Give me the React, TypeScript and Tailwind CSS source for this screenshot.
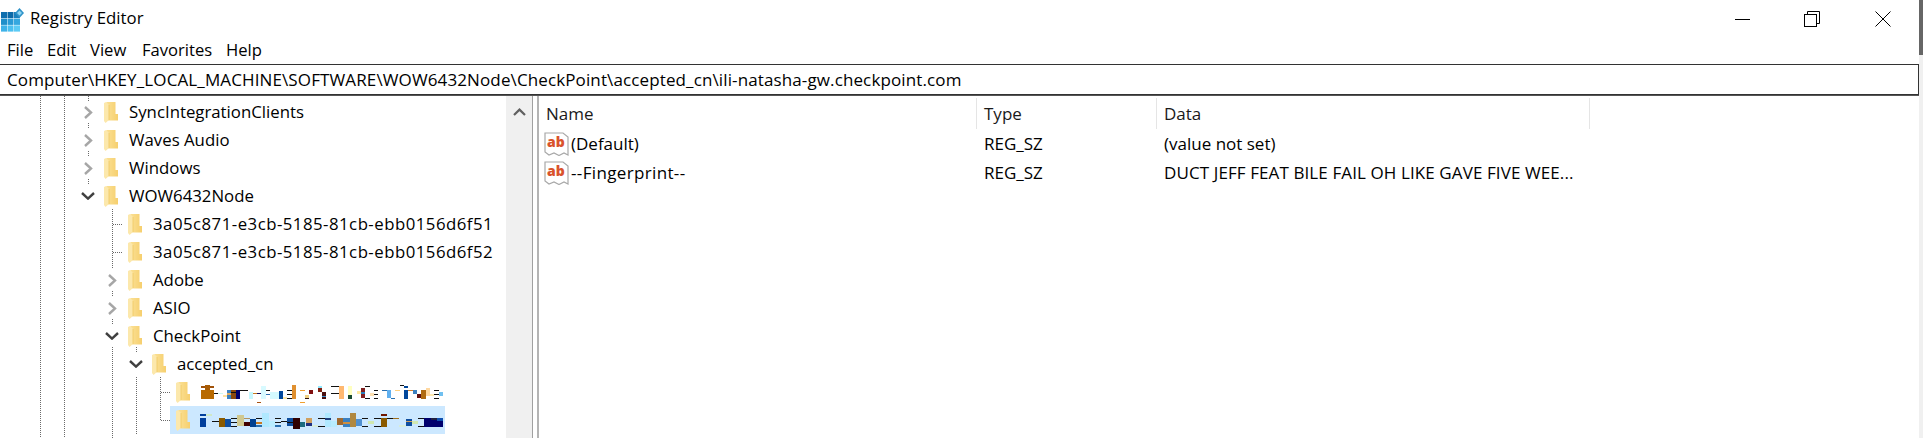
import React from "react";

const font = "font-['Open_Sans','Noto_Sans',sans-serif]";

function AppIcon() {
  const cells = [
    ["#0f6fae", "#0c6aa8", "#1a80bd"],
    ["#1f8fca", "#2a9bd6", "#35a8e0"],
    ["#3eb2e8", "#4cc0f0", "#5ccbf5"],
  ];
  return (
    <svg width="24" height="32" viewBox="0 0 24 32" className="shrink-0">
      {cells.map((r, y) =>
        r.map((c, x) => <rect key={`${x}${y}`} x={1 + x * 6.5} y={9 + y * 6.7} width="6" height="6.2" fill={c} />)
      )}
      <path d="M19.5 5 L24 10 L19.5 15 L15 10 Z" fill="#2f93c9" />
      <path d="M19.5 7.5 L22 10 L19.5 12.5 L17 10 Z" fill="#8fd4f2" />
    </svg>
  );
}

function Folder() {
  return (
    <svg width="14" height="21" viewBox="0 0 14 21" className="shrink-0">
      <defs>
        <linearGradient id="fb" x1="0" x2="1" y1="0" y2="0">
          <stop offset="0" stopColor="#fbe196" />
          <stop offset="1" stopColor="#f6cf6e" />
        </linearGradient>
      </defs>
      <path d="M2 0 H11.5 V12 H14 V18.5 H4 V3 Z" fill="url(#fb)" />
      <path d="M0 1 L2 0 L5 3 V18 L1.5 21 L0 19 Z" fill="#fce8ac" />
      <path d="M5 3 V18" stroke="#f0c860" strokeWidth="0.8" />
    </svg>
  );
}

function Chevron({ open }: { open?: boolean }) {
  return (
    <span className="w-[16px] h-full flex items-center justify-center shrink-0">
      {open === undefined ? null : open ? (
        <svg width="14" height="8" viewBox="0 0 14 8">
          <path d="M1 1 L7 6.6 L13 1" fill="none" stroke="#404040" strokeWidth="2.4" />
        </svg>
      ) : (
        <svg width="9" height="13" viewBox="0 0 9 13">
          <path d="M1 1 L7 6.5 L1 12" fill="none" stroke="#a6a6a6" strokeWidth="2.4" />
        </svg>
      )}
    </span>
  );
}

type R = [number, number, number, number, string];

const noiseA: R[] = [
  [1, 8, 13, 2, "#a0520a"], [5, 7, 5, 5, "#a85c06"], [1, 12, 13, 9, "#b86a00"],
  [14, 15, 4, 1, "#111"], [18, 15, 5, 1, "#cdfaf5"], [23, 17, 4, 2, "#ffe3a0"],
  [27, 12, 4, 9, "#3a80c0"], [27, 15, 4, 2, "#d8a860"], [31, 12, 5, 9, "#8a4a10"], [31, 14, 5, 1, "#111"], [36, 12, 4, 9, "#00006e"],
  [40, 12, 8, 1, "#111"], [49, 14, 4, 7, "#c8f8ff"], [53, 15, 4, 1, "#c87a20"], [57, 15, 4, 1, "#101060"], [57, 24, 4, 1, "#a85010"],
  [61, 8, 5, 13, "#d8faff"], [66, 12, 4, 1, "#111"], [66, 16, 4, 1, "#2a70b0"], [70, 14, 9, 7, "#d4faff"], [79, 13, 4, 8, "#00479c"], [83, 19, 4, 2, "#ffe9a8"],
  [87, 12, 5, 1, "#111"], [87, 16, 5, 1, "#111"], [87, 20, 5, 1, "#111"], [92, 7, 4, 14, "#e09030"],
  [100, 12, 5, 1, "#f0a030"], [100, 24, 5, 1, "#f0a030"], [105, 17, 4, 4, "#f0d080"], [105, 20, 4, 1, "#301010"], [109, 12, 4, 4, "#801010"],
  [118, 8, 4, 2, "#90e8ff"], [118, 10, 4, 4, "#802010"], [122, 14, 4, 7, "#4a1010"], [122, 18, 4, 1, "#3a90d0"],
  [131, 8, 8, 1, "#111"], [131, 15, 8, 1, "#111"], [139, 8, 5, 13, "#ffb870"], [148, 8, 4, 9, "#ffffc0"], [148, 17, 4, 4, "#1a4a30"],
  [157, 13, 4, 3, "#ffe8a0"], [161, 10, 4, 10, "#802020"], [161, 14, 4, 2, "#2a80c0"], [165, 8, 5, 1, "#111"], [165, 20, 5, 1, "#111"], [170, 15, 4, 3, "#ffe0b0"],
  [174, 12, 4, 1, "#111"], [174, 16, 4, 1, "#111"], [174, 20, 4, 1, "#111"],
  [182, 12, 5, 1, "#2a70b0"], [187, 12, 4, 8, "#60b0f0"], [191, 20, 4, 1, "#2a70b0"], [195, 12, 5, 1, "#ffd080"], [200, 7, 4, 1, "#111"],
  [204, 8, 4, 2, "#00479c"], [204, 12, 4, 9, "#00479c"], [208, 12, 5, 1, "#d08030"], [213, 12, 4, 4, "#3a80c0"], [217, 16, 4, 4, "#601010"],
  [221, 12, 5, 9, "#b06a10"], [226, 10, 4, 8, "#ffd8a0"], [230, 16, 4, 2, "#ffeab0"], [234, 12, 5, 1, "#111"], [234, 16, 5, 1, "#111"], [234, 20, 5, 1, "#111"], [239, 14, 4, 4, "#70c0f0"],
];

const noiseB: R[] = [
  [0, 8, 6, 2, "#003e9c"], [6, 8, 6, 2, "#cfe8c8"], [0, 12, 6, 9, "#003e9c"],
  [12, 15, 7, 1, "#111"], [19, 12, 6, 9, "#8a5a00"], [25, 13, 6, 8, "#0e4ea0"], [31, 12, 6, 1, "#111"], [31, 16, 6, 1, "#111"], [31, 20, 6, 1, "#111"],
  [37, 9, 7, 11, "#d0c890"], [44, 12, 6, 1, "#b09060"], [44, 16, 6, 4, "#400000"], [50, 13, 6, 8, "#004090"], [56, 12, 6, 1, "#111"], [56, 16, 6, 2, "#c87a20"], [56, 19, 6, 2, "#2a70b0"],
  [62, 7, 7, 14, "#b0e8ff"], [69, 15, 6, 6, "#b8ecff"], [75, 12, 6, 1, "#111"], [75, 16, 6, 1, "#111"], [75, 19, 6, 2, "#2a70b0"],
  [81, 15, 6, 1, "#111"], [87, 12, 6, 8, "#0e4ea0"], [87, 16, 6, 1, "#111"], [93, 12, 7, 11, "#300000"], [100, 16, 5, 5, "#1a6a80"], [106, 12, 6, 8, "#d0a060"], [106, 17, 6, 3, "#203080"],
  [112, 19, 6, 2, "#d8ecd8"], [118, 12, 7, 1, "#111"], [118, 20, 7, 1, "#111"], [125, 7, 6, 14, "#b0e8ff"], [125, 12, 6, 2, "#204080"], [131, 15, 6, 6, "#b8ecff"],
  [137, 12, 6, 7, "#a06a30"], [143, 12, 7, 9, "#3a80c0"], [143, 16, 7, 2, "#d09040"], [150, 7, 6, 14, "#b08840"], [156, 13, 6, 7, "#5090d0"], [162, 12, 6, 1, "#111"], [162, 20, 6, 1, "#111"],
  [168, 15, 6, 3, "#d0e8b0"], [174, 12, 7, 1, "#111"], [174, 20, 7, 1, "#111"], [181, 8, 6, 2, "#701800"], [181, 12, 6, 9, "#8a5a00"], [187, 12, 6, 1, "#111"], [193, 12, 6, 1, "#a07020"],
  [199, 19, 7, 2, "#d8ecd8"], [206, 13, 6, 7, "#0e4ea0"], [206, 15, 6, 1, "#d0a060"], [212, 15, 6, 3, "#d0e8b0"], [218, 12, 6, 1, "#111"], [218, 20, 6, 1, "#111"],
  [224, 12, 19, 9, "#00006e"], [231, 12, 6, 2, "#202040"], [237, 12, 6, 3, "#1050b0"],
];

function Noise({ rects }: { rects: R[] }) {
  return (
    <svg width="245" height="28" viewBox="0 0 245 28" className="shrink-0">
      {rects.map(([x, y, w, h, c], i) => (
        <rect key={i} x={x} y={y} width={w} height={h} fill={c} shapeRendering="crispEdges" />
      ))}
    </svg>
  );
}

function TreeRow({ pad, open, label, noise, selected, labelClass }: { pad: string; open?: boolean; label?: string; noise?: R[]; selected?: boolean; labelClass?: string }) {
  return (
    <div className={`h-[28px] flex items-center text-[16.8px] text-black ${pad}`}>
      <Chevron open={open} />
      <div className={`h-[28px] ml-[2px] pl-[6px] flex items-center ${selected ? "bg-[#cce8ff]" : ""}`}>
        <Folder />
        {label ? <span className={`ml-[11px] whitespace-nowrap ${labelClass ?? ""}`}>{label}</span> : null}
        {noise ? <span className="ml-[10px] flex"><Noise rects={noise} /></span> : null}
      </div>
    </div>
  );
}

function AbIcon() {
  return (
    <svg width="25" height="24" viewBox="0 0 25 24" className="shrink-0">
      <path d="M1 1 H19 L24 5 V23 L20 21 L15 23.5 L10 21 L5 23 L1 20 Z" fill="#fff" stroke="#a8a8a8" strokeWidth="1.2" />
      <text x="3" y="15" fontFamily="Open Sans" fontWeight="800" fontSize="14" fill="#d9532c">ab</text>
    </svg>
  );
}

function ValueRow({ name, data, nameClass, dataClass }: { name: string; data: string; nameClass?: string; dataClass?: string }) {
  return (
    <div className="h-[29px] flex items-center text-[17px] text-black">
      <div className="w-[438px] pl-[5px] flex items-center">
        <AbIcon />
        <span className={`ml-[2px] whitespace-nowrap ${nameClass ?? ""}`}>{name}</span>
      </div>
      <div className="w-[180px] pl-[7px]">REG_SZ</div>
      <div className={`pl-[7px] whitespace-nowrap ${dataClass ?? ""}`}>{data}</div>
    </div>
  );
}

function TreeLines() {
  const d = "#6a6a6a";
  const v = (x: number, a: number, b: number) => `M${x + 0.5} ${a}V${b}`;
  const h = (y: number, a: number, b: number) => `M${a} ${y + 0.5}H${b}`;
  const path = [
    v(40, 95, 438), v(64, 95, 438),
    v(88, 95, 100), v(88, 122, 127), v(88, 150, 155), v(88, 178, 183),
    v(112, 208, 262), h(223, 113, 123), h(251, 113, 123),
    v(112, 262, 268), v(112, 290, 295), v(112, 318, 323), v(112, 346, 438),
    v(136, 346, 351), v(136, 376, 434),
    v(160, 376, 420), h(391, 161, 170), h(419, 161, 170),
  ].join("");
  return (
    <svg width="506" height="343" viewBox="0 95 506 343" className="absolute left-0 top-0 pointer-events-none">
      <path d={path} fill="none" stroke={d} strokeWidth="1" strokeDasharray="1 1" shapeRendering="crispEdges" />
    </svg>
  );
}

export default function App() {
  return (
    <div className={`w-[1923px] h-[438px] overflow-hidden bg-white flex text-black ${font}`}>
      <div className="w-[1919px] flex flex-col">
        <div className="h-[38px] flex items-center">
          <div className="pl-[0px] w-[30px] shrink-0"><AppIcon /></div>
          <span className="text-[16.8px] pb-[2px]">Registry Editor</span>
          <div className="ml-auto flex h-full">
            <div className="w-[69px] flex items-center justify-center">
              <svg width="15" height="15" viewBox="0 0 15 15"><path d="M0 7.5H15" stroke="#000" strokeWidth="1" /></svg>
            </div>
            <div className="w-[69px] flex items-center justify-center">
              <svg width="16" height="16" viewBox="0 0 16 16" fill="none" stroke="#000" strokeWidth="1">
                <rect x="0.5" y="3.5" width="12" height="12" />
                <path d="M3.5 3.5V0.5H15.5V12.5H12.5" />
              </svg>
            </div>
            <div className="w-[73px] flex items-center justify-center">
              <svg width="16" height="16" viewBox="0 0 16 16"><path d="M0.5 0.5L15.5 15.5M15.5 0.5L0.5 15.5" stroke="#000" strokeWidth="1" /></svg>
            </div>
          </div>
        </div>
        <div className="h-[26px] flex items-center pl-[7px] pb-[2px] text-[16.6px]">
          <span className="w-[40px]">File</span>
          <span className="w-[43px]">Edit</span>
          <span className="w-[52px]">View</span>
          <span className="w-[84px]">Favorites</span>
          <span>Help</span>
        </div>
        <div className="h-[31px] border-y border-r border-[#333] flex items-center pl-[7px] text-[17px] tracking-[0.12px] whitespace-nowrap">
          Computer\HKEY_LOCAL_MACHINE\SOFTWARE\WOW6432Node\CheckPoint\accepted_cn\ili-natasha-gw.checkpoint.com
        </div>
        <div className="flex-1 flex min-h-0 border-t border-[#555]">
          <div className="relative w-[506px] shrink-0 overflow-hidden pt-[2px]">
            <TreeLines />
            <TreeRow pad="pl-[80px]" open={false} label="SyncIntegrationClients" />
            <TreeRow pad="pl-[80px]" open={false} label="Waves Audio" />
            <TreeRow pad="pl-[80px]" open={false} label="Windows" />
            <TreeRow pad="pl-[80px]" open label="WOW6432Node" />
            <TreeRow pad="pl-[104px]" label="3a05c871-e3cb-5185-81cb-ebb0156d6f51" labelClass="tracking-[0.48px]" />
            <TreeRow pad="pl-[104px]" label="3a05c871-e3cb-5185-81cb-ebb0156d6f52" labelClass="tracking-[0.48px]" />
            <TreeRow pad="pl-[104px]" open={false} label="Adobe" />
            <TreeRow pad="pl-[104px]" open={false} label="ASIO" />
            <TreeRow pad="pl-[104px]" open label="CheckPoint" />
            <TreeRow pad="pl-[128px]" open label="accepted_cn" />
            <TreeRow pad="pl-[152px]" noise={noiseA} />
            <TreeRow pad="pl-[152px]" noise={noiseB} selected />
            <TreeRow pad="pl-[128px]" />
          </div>
          <div className="w-[26px] shrink-0 bg-[#f0f0f0] flex justify-center pt-[12px]">
            <svg width="13" height="8" viewBox="0 0 13 8">
              <path d="M1 7 L6.5 1.6 L12 7" fill="none" stroke="#606060" strokeWidth="2.2" />
            </svg>
          </div>
          <div className="w-[7px] shrink-0 border-l border-r-2 border-l-[#a0a0a0] border-r-[#b4b4b4] bg-white" />
          <div className="flex-1 pt-[2px]">
            <div className="h-[31px] flex items-center text-[17px] text-[#1a1a1a]">
              <div className="w-[438px] h-full pl-[7px] flex items-center border-r border-[#e5e5e5]">Name</div>
              <div className="w-[180px] h-full pl-[7px] flex items-center border-r border-[#e5e5e5]">Type</div>
              <div className="w-[433px] h-full pl-[7px] flex items-center border-r border-[#e5e5e5]">Data</div>
            </div>
            <ValueRow name="(Default)" data="(value not set)" />
            <ValueRow name="--Fingerprint--" nameClass="tracking-[0.35px]" data="DUCT JEFF FEAT BILE FAIL OH LIKE GAVE FIVE WEE..." dataClass="tracking-[0.1px]" />
          </div>
        </div>
      </div>
      <div className="w-[4px] flex flex-col bg-[#f0f0f0]">
        <div className="h-[55px] bg-[#666]" />
      </div>
    </div>
  );
}
